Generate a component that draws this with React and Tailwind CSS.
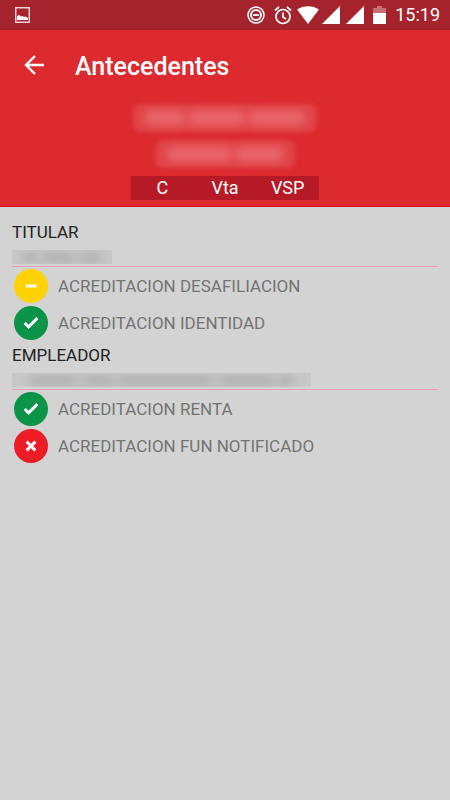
import React from 'react';

const TAGS = ['C', 'Vta', 'VSP'];

const SECTIONS = [
  {
    title: 'TITULAR',
    mask: 'w-[100px]',
    words: ['w-4', 'w-8', 'w-6'],
    items: [
      { label: 'ACREDITACION DESAFILIACION', status: 'pending' },
      { label: 'ACREDITACION IDENTIDAD',     status: 'ok' },
    ],
  },
  {
    title: 'EMPLEADOR',
    mask: 'w-[299px]',
    words: ['w-12', 'w-8', 'w-24', 'w-14', 'w-4'],
    items: [
      { label: 'ACREDITACION RENTA',          status: 'ok' },
      { label: 'ACREDITACION FUN NOTIFICADO', status: 'error' },
    ],
  },
];

const STATUS = {
  pending: { name: 'Pendiente', color: 'bg-[#ffd200]', path: 'M12 17.5h11' },
  ok:      { name: 'Aprobado',  color: 'bg-[#0b9447]', path: 'M11 17.5l4 4 9-9' },
  error:   { name: 'Rechazado', color: 'bg-[#ee1c25]', path: 'M13 13l9 9M22 13l-9 9' },
};

function StatusIcon({ status }) {
  const s = STATUS[status];
  return (
    <span className={`size-[34px] shrink-0 rounded-full ${s.color}`}>
      <svg viewBox="0 0 35 35" className="size-full" fill="none" stroke="#fff" strokeWidth="3" role="img" aria-label={s.name}>
        <path d={s.path} />
      </svg>
    </span>
  );
}

// Personal data is shown as soft blocks instead of text
function Masked({ words, className, color }) {
  return (
    <div aria-hidden="true" className={`flex items-center justify-center gap-1 ${className}`}>
      {words.map((w, i) => <span key={i} className={`h-1/2 rounded-sm blur-xs ${w} ${color}`} />)}
    </div>
  );
}

function StatusBar() {
  return (
    <div className="flex h-[30px] items-center justify-between bg-[#a5232d] pr-[10px] pl-[15px] text-white">
      <svg viewBox="0 0 15 16" className="h-4 w-[15px]" aria-hidden="true">
        <rect x="0.75" y="0.75" width="13.5" height="14.5" fill="none" stroke="#fff" strokeOpacity=".85" strokeWidth="1.4" />
        <path d="M2 13V9.5l2-1.7 2 1.7 1.5-.5L9 10l1.5-.6L13 11v2z" fill="#fff" />
      </svg>
      <div className="flex items-center">
        <svg viewBox="0 0 18 18" className="size-[18px]" fill="none" stroke="#fff" aria-hidden="true">
          <circle cx="9" cy="9" r="8" strokeWidth="1.5" />
          <circle cx="9" cy="9" r="5" strokeWidth="1.9" />
          <path d="M6 9h6" strokeWidth="1.9" />
        </svg>
        <svg viewBox="0 0 18 19" className="ml-[9px] h-[19px] w-[18px]" fill="none" stroke="#fff" strokeWidth="1.7" aria-hidden="true">
          <circle cx="9" cy="10.5" r="7" />
          <path d="M9 6.5v4.5l3 2M1 4.5L5 1M17 4.5L13 1" />
        </svg>
        <svg viewBox="0 0 22 18" className="ml-[5px] h-[18px] w-[22px]" fill="#fff" aria-hidden="true">
          <path d="M0 3.5C6.5-1 15.5-1 22 3.5L11 18z" />
        </svg>
        <svg viewBox="0 0 18 18" className="ml-[3px] size-[18px]" fill="#fff" aria-hidden="true"><path d="M18 0v18H0z" /></svg>
        <svg viewBox="0 0 18 18" className="ml-[6px] size-[18px]" fill="#fff" aria-hidden="true"><path d="M18 0v18H0z" /></svg>
        <svg viewBox="0 0 13 18" className="ml-[9px] h-[18px] w-[13px]" fill="#fff" aria-hidden="true">
          <path d="M0 2h4V0h5v2h4v5H0z" opacity=".35" />
          <path d="M0 7h13v11H0z" />
        </svg>
        <span className="ml-[9px] text-[18px] leading-6">15:19</span>
      </div>
    </div>
  );
}

function Section({ title, mask, words, items }) {
  return (
    <section className="pb-[3px]">
      <h2 className="text-[17px] leading-6 text-[#222]">{title}</h2>
      <div className="flex h-[23px] items-end border-b border-[#e79fb1] pb-[2px]">
        <Masked words={words} className={`h-[14px] overflow-hidden bg-[#c7c7c7] ${mask}`} color="bg-[#acacac]" />
      </div>
      <ul className="flex flex-col gap-[3px] px-[2px] pt-[2px]">
        {items.map(it => (
          <li key={it.label} className="flex items-center gap-[10px]">
            <StatusIcon status={it.status} />
            <span className="text-[17px] leading-6 text-[#737373]">{it.label}</span>
          </li>
        ))}
      </ul>
    </section>
  );
}

export default function App() {
  return (
    <div className="min-h-screen bg-[#d3d3d3] font-['Roboto',sans-serif]">
      <StatusBar />
      <header className="border-b border-[#d50a0f] bg-[#dc2a2f] pb-[6px] text-white">
        <div className="flex h-[74px] items-center gap-[30px] px-6">
          <button type="button" aria-label="Volver" className="-mt-[4px]">
            <svg viewBox="0 0 21 20" className="h-5 w-[21px]" fill="none" stroke="#fff" strokeWidth="2.4" aria-hidden="true">
              <path d="M20 10H2M11 1l-9 9 9 9" />
            </svg>
          </button>
          <h1 className="text-[25px] leading-8 font-medium">Antecedentes</h1>
        </div>
        <div className="flex flex-col items-center gap-2">
          <Masked words={['w-10', 'w-14', 'w-14']} className="h-7 w-[184px] rounded-lg bg-[#e04347] blur-[2px]" color="bg-[#e9696d]" />
          <Masked words={['w-16', 'w-12']} className="h-7 w-[140px] rounded-lg bg-[#e04347] blur-[2px]" color="bg-[#e9696d]" />
          <ul className="grid w-[188px] grid-cols-3 bg-[#b51a26] text-center text-[18px] leading-6">
            {TAGS.map(t => <li key={t}>{t}</li>)}
          </ul>
        </div>
      </header>
      <main className="px-3 pt-[13px]">
        {SECTIONS.map(s => <Section key={s.title} {...s} />)}
      </main>
    </div>
  );
}
